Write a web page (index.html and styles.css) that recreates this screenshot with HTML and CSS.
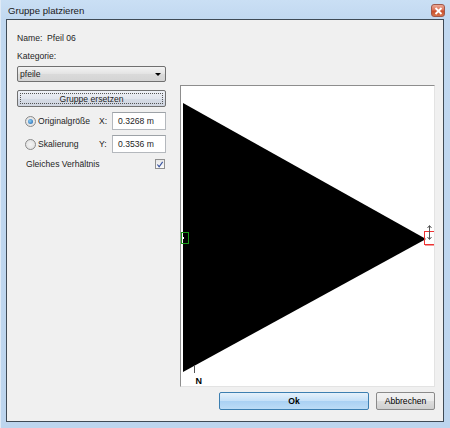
FILE: index.html
```html
<!DOCTYPE html>
<html>
<head>
<meta charset="utf-8">
<link rel="stylesheet" href="styles.css">
</head>
<body>
<div class="window">
  <div class="titlebar">
    <span class="title">Gruppe platzieren</span>
    <span class="close"><svg width="9" height="8" viewBox="0 0 9 8"><path d="M1.5 1 L7.5 7 M7.5 1 L1.5 7" stroke="#fff" stroke-width="1.8"/></svg></span>
  </div>
  <div class="client">
    <div class="left">
      <div class="line name">Name:&nbsp; Pfeil 06</div>
      <div class="line kat">Kategorie:</div>
      <div class="select"><span>pfeile</span><span class="arrow"></span></div>
      <div class="btn replace"><span class="focus">Gruppe ersetzen</span></div>
      <div class="row r1">
        <span class="radio checked"></span><span class="lbl">Originalgröße</span><span class="axis">X:</span><span class="input">0.3268 m</span>
      </div>
      <div class="row r2">
        <span class="radio"></span><span class="lbl">Skalierung</span><span class="axis">Y:</span><span class="input">0.3536 m</span>
      </div>
      <div class="row r3">
        <span class="lbl2">Gleiches Verhältnis</span>
        <span class="check"><svg width="9" height="9" viewBox="0 0 9 9"><path d="M1.5 4.5 L3.5 7 L7.5 1.5" fill="none" stroke="#3b55a0" stroke-width="1.3"/></svg></span>
      </div>
    </div>
    <div class="right">
      <div class="preview">
        <svg width="253" height="300" viewBox="0 0 253 300">
          <polygon points="2,17 2,286 245,153" fill="#000"/>
          <rect x="0.5" y="146.5" width="7" height="11" fill="none" stroke="#1a9a1a" stroke-width="1"/>
          <rect x="1" y="151" width="2" height="2" fill="#fff"/>
          <rect x="243.5" y="145.5" width="10" height="13" fill="none" stroke="#ee3333" stroke-width="1"/>
          <line x1="244" y1="159.5" x2="253" y2="159.5" stroke="#f29b9b" stroke-width="1"/>
          <path d="M248.5 140 L248.5 153 M246.5 142 L248.5 139.5 L250.5 142 M246.5 151 L248.5 153.5 L250.5 151" fill="none" stroke="#444" stroke-width="0.9"/>
          <line x1="13.5" y1="279" x2="13.5" y2="287" stroke="#555" stroke-width="1"/>
          <text x="14.5" y="298" class="north">N</text>
        </svg>
      </div>
      <div class="buttons">
        <div class="btn ok">Ok</div>
        <div class="btn cancel">Abbrechen</div>
      </div>
    </div>
  </div>
</div>
</body>
</html>
```

FILE: styles.css
```css
html, body {
  margin: 0;
  padding: 0;
  background: #bcd5ee;
}
.window {
  width: 450px;
  height: 428px;
  box-sizing: border-box;
  padding: 0 6px 6px 5px;
  background: linear-gradient(#cadff4 0px, #c1d8f0 20px, #bdd5ee 100%);
  border-left: 1px solid #dfeaf6;
  display: flex;
  flex-direction: column;
  font-family: "Liberation Sans", Arial, sans-serif;
  color: #000;
}
.titlebar {
  height: 19px;
  display: flex;
  align-items: center;
  justify-content: space-between;
}
.title {
  font-size: 9.6px;
  padding-left: 2px;
  padding-top: 2px;
  color: #1a1a1a;
}
.close {
  width: 14px;
  height: 13px;
  margin-right: -1px;
  margin-top: 2px;
  border: 1px solid #a0584a;
  border-radius: 3px;
  background: linear-gradient(#eba996 0%, #dc7359 45%, #c94f2c 55%, #d7744a 100%);
  display: flex;
  align-items: center;
  justify-content: center;
  box-sizing: border-box;
}
.client {
  flex: 1;
  border: 1px solid #3f4a55;
  background: #f0f0f0;
  display: flex;
  padding: 0 8px 0 10px;
  font-size: 8.6px;
}
.left {
  width: 150px;
  padding-top: 11px;
  display: flex;
  flex-direction: column;
  color: #1e1e1e;
}
.line {
  height: 14px;
  line-height: 14px;
}
.name { margin-bottom: 4px; }
.kat { margin-bottom: 3px; }
.select {
  height: 16px;
  box-sizing: border-box;
  border: 1px solid #707070;
  border-radius: 2px;
  background: linear-gradient(#f3f3f3, #e3e3e3 50%, #dadada 51%, #d4d4d4);
  display: flex;
  align-items: center;
  justify-content: space-between;
  padding: 0 3px 0 2px;
  margin-bottom: 8px;
}
.arrow {
  width: 0;
  height: 0;
  border-left: 3px solid transparent;
  border-right: 3px solid transparent;
  border-top: 3px solid #000;
  margin-right: 1px;
}
.btn {
  box-sizing: border-box;
  border: 1px solid #707070;
  border-radius: 2px;
  display: flex;
  align-items: center;
  justify-content: center;
}
.replace {
  height: 17px;
  padding: 2px;
  background: linear-gradient(#eef1f6, #e2e6ee 50%, #d6dce6 51%, #cfd5e0);
  margin-bottom: 5px;
}
.focus {
  flex: 1;
  align-self: stretch;
  border: 1px dotted #555;
  text-align: center;
  line-height: 11px;
}
.row {
  height: 18px;
  display: flex;
  align-items: center;
}
.r1 { margin-bottom: 5px; }
.r2 { margin-bottom: 4px; }
.r3 { height: 14px; justify-content: space-between; padding-left: 9px; }
.radio {
  width: 11px;
  height: 11px;
  box-sizing: border-box;
  border-radius: 50%;
  border: 1px solid #8a8a8a;
  background: radial-gradient(circle, #f4f4f4 0%, #dcdcdc 100%);
  margin-left: 8px;
  margin-right: 2px;
  position: relative;
}
.radio.checked::after {
  content: "";
  position: absolute;
  left: 2px;
  top: 2px;
  width: 5px;
  height: 5px;
  border-radius: 50%;
  background: radial-gradient(circle at 40% 40%, #8ad0f8, #1a5aa5);
}
.lbl {
  width: 61px;
}
.axis {
  width: 13px;
}
.input {
  width: 54px;
  height: 18px;
  box-sizing: border-box;
  border: 1px solid #b4b8bd;
  border-top-color: #9da2a7;
  background: #fff;
  padding-left: 5px;
  line-height: 16px;
}
.check {
  width: 10px;
  height: 10px;
  box-sizing: border-box;
  border: 1px solid #8f8f8f;
  background: linear-gradient(#e6e6e6, #fafafa);
  display: flex;
  align-items: center;
  justify-content: center;
  margin-right: 1px;
}
.check svg { display: block; }
.right {
  margin-left: 14px;
  width: 255px;
  padding-top: 65px;
  display: flex;
  flex-direction: column;
}
.preview {
  width: 255px;
  height: 302px;
  box-sizing: border-box;
  border: 1px solid;
  border-color: #8d8d8d #e3e3e3 #e3e3e3 #8d8d8d;
  background: #fff;
}
.preview svg { display: block; }
.north {
  font-family: "Liberation Sans", Arial, sans-serif;
  font-weight: bold;
  font-size: 9px;
  fill: #000;
}
.buttons {
  display: flex;
  justify-content: flex-end;
  gap: 7px;
  margin-top: 5px;
}
.ok {
  width: 150px;
  height: 18px;
  border-color: #3c7fb1;
  background: linear-gradient(#e5f1fb, #c4e0f8 50%, #a9d1f3 51%, #bcdcf6);
  font-weight: bold;
}
.cancel {
  width: 59px;
  height: 18px;
  background: linear-gradient(#f2f2f2, #ebebeb 50%, #dddddd 51%, #cfcfcf);
  border-color: #8a8a8a;
}
```
